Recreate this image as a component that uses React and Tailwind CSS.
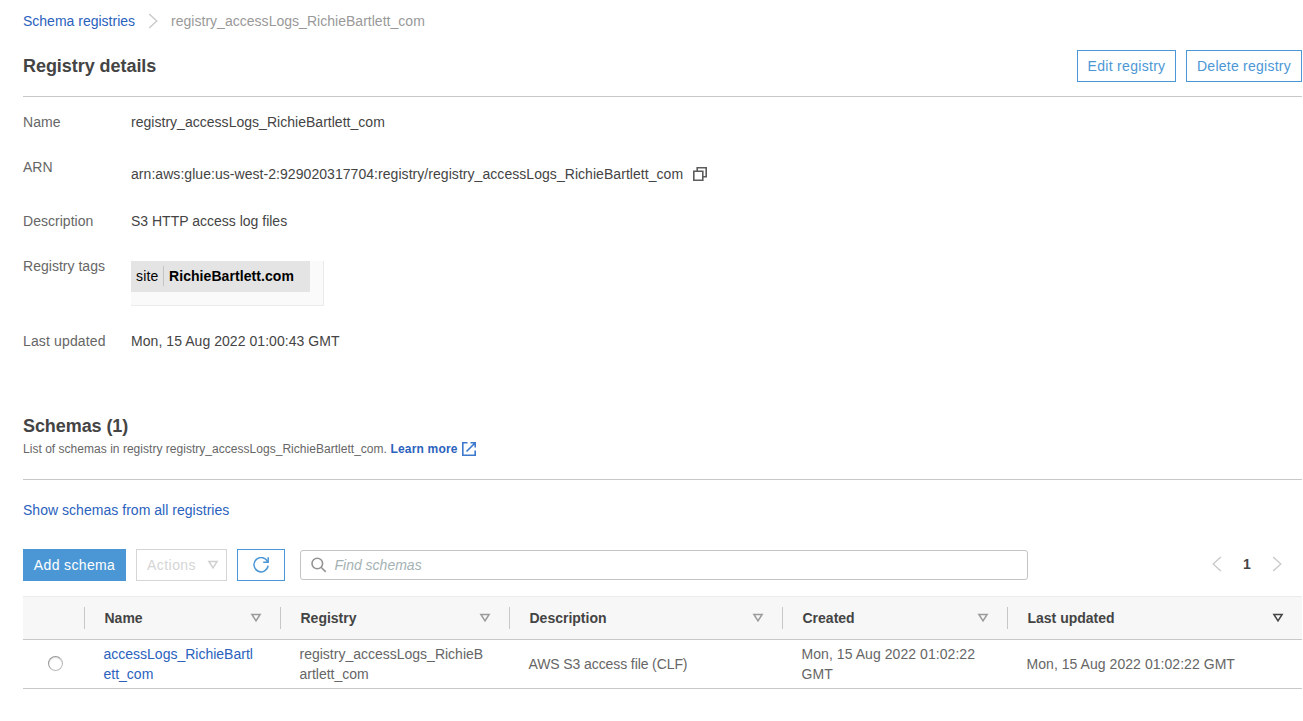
import React from "react";

const Chevron = ({ left }) => (
  <svg width="10" height="16" viewBox="0 0 10 16" fill="none" stroke="#c8c8c8" strokeWidth="1.3" className="shrink-0">
    <path d={left ? "M8.8 1 1.200 8l7.600 7" : "M1.200 1 8.800 8l-7.600 7"} />
  </svg>
);

const Triangle = ({ color = "#9b9b9b" }) => (
  <svg width="12" height="10" viewBox="0 0 12 10" className="shrink-0">
    <path d="M1.900 1.500h8.200L6 7.800z" fill="none" stroke={color} strokeWidth="1.500" />
  </svg>
);

const CopyIcon = () => (
  <svg width="14" height="14" viewBox="0 0 14 14" fill="none" stroke="#5c5c5c" strokeWidth="1.600" className="shrink-0">
    <path d="M.8 4.200h9v9h-9z" />
    <path d="M4.200 4V.8h9v9H10" />
  </svg>
);

const ExternalIcon = () => (
  <svg width="14" height="14" viewBox="0 0 14 14" fill="none" stroke="#3c78cc" strokeWidth="1.600" className="shrink-0">
    <path d="M5.500.8H.8v12.400h12.400V8.500M8.500.8h4.700V5.500M13 1 4.500 9.500" />
  </svg>
);

const RefreshIcon = () => (
  <svg width="16" height="16" viewBox="0 0 16 16" fill="none" stroke="#4b97d6" strokeWidth="1.500" className="shrink-0">
    <path d="M14.700 5.200A7.100 7.100 0 1 0 15.100 8.700" />
    <path d="M15.200.3v5h-5" />
  </svg>
);

const SearchIcon = () => (
  <svg width="16" height="16" viewBox="0 0 16 16" fill="none" stroke="#949494" strokeWidth="1.600" className="shrink-0">
    <circle cx="6.300" cy="6.500" r="5.300" />
    <path d="m10.100 10.300 4.600 4.600" />
  </svg>
);

const Label = ({ children }) => <dt className="w-[108px] shrink-0 text-[#666]">{children}</dt>;

const HeaderCell = ({ children, className, triangle }) => (
  <div className={`flex h-full shrink-0 items-center ${className}`}>
    <div className="flex h-[22px] flex-1 items-center justify-between border-l border-[#c8c8c8] pl-[19.500px]">
      <span className="font-bold tracking-normal text-[#444]">{children}</span>
      <span className="mr-[18px]">
        <Triangle color={triangle} />
      </span>
    </div>
  </div>
);

export default function App() {
  return (
    <main className="h-[721px] w-[1303px] overflow-hidden bg-white pl-[23px] pr-px pt-[11px] font-['Liberation_Sans',Arial,sans-serif] text-[14px] leading-[20px] tracking-[0.025px] text-[#444]">
      <nav className="flex h-[20px] items-center whitespace-nowrap">
        <a className="w-[112px] tracking-normal text-[#2a62bd]">Schema registries</a>
        <span className="ml-[13px] mr-[13px]"><Chevron /></span>
        <span className="text-[#999]">registry_accessLogs_RichieBartlett_com</span>
      </nav>

      <header className="mt-[19px] flex h-[47px] items-start justify-between border-b border-[#c8c8c8]">
        <h2 className="text-[18px] font-bold leading-[32px] tracking-[-0.05px]">Registry details</h2>
        <div className="flex gap-[10px]">
          <button className="h-[32px] w-[99px] border border-[#4b97d6] tracking-[0.300px] text-[#4b97d6]">Edit registry</button>
          <button className="h-[32px] w-[116px] border border-[#4b97d6] tracking-[0.250px] text-[#4b97d6]">Delete registry</button>
        </div>
      </header>

      <dl className="mt-[15px]">
        <div className="flex h-[45px]">
          <Label>Name</Label>
          <dd>registry_accessLogs_RichieBartlett_com</dd>
        </div>
        <div className="flex h-[54px]">
          <Label>ARN</Label>
          <dd className="flex h-[34px] items-center whitespace-nowrap">
            <span className="w-[562px] tracking-[0.052px]">arn:aws:glue:us-west-2:929020317704:registry/registry_accessLogs_RichieBartlett_com</span>
            <CopyIcon />
          </dd>
        </div>
        <div className="flex h-[45px]">
          <Label>Description</Label>
          <dd className="tracking-normal">S3 HTTP access log files</dd>
        </div>
        <div className="flex h-[75px]">
          <Label>Registry tags</Label>
          <dd className="mt-[5px] h-[45px] w-[193px] border-b border-r border-[#ebebeb] bg-[#fafafa]">
            <div className="flex h-[31px] w-[179px] items-start bg-[#e4e4e4] pl-[5px] pt-[5px] text-black">
              <span className="w-[27px] tracking-[0.200px]">site</span>
              <span className="flex h-[20px] items-center border-l border-[#c4c4c4] pl-[5px] font-bold tracking-[0.070px]">RichieBartlett.com</span>
            </div>
          </dd>
        </div>
        <div className="flex h-[20px]">
          <Label><span className="tracking-[0.140px]">Last updated</span></Label>
          <dd className="tracking-[0.055px]">Mon, 15 Aug 2022 01:00:43 GMT</dd>
        </div>
      </dl>

      <section className="mt-[64px] h-[65px] border-b border-[#c8c8c8]">
        <h2 className="text-[18px] font-bold leading-[22px] tracking-[-0.080px]">Schemas (1)</h2>
        <p className="mt-[3px] flex h-[18px] items-center whitespace-nowrap text-[12px] leading-[18px] text-[#666]">
          <span className="w-[367.500px] tracking-[0.027px]">List of schemas in registry registry_accessLogs_RichieBartlett_com.</span>
          <a className="w-[71.500px] font-bold tracking-[0.180px] text-[#2a62bd]">Learn more</a>
          <ExternalIcon />
        </p>
      </section>

      <a className="mt-[20px] block tracking-[0.030px] text-[#2a62bd]">Show schemas from all registries</a>

      <div className="mt-[29px] flex h-[32px] items-center">
        <button className="h-[32px] w-[103px] bg-[#4b97d6] tracking-[0.360px] text-white">Add schema</button>
        <button className="ml-[10px] flex h-[32px] w-[91px] items-center border border-[#d5d5d5] pl-[10px] text-[#d5d5d5]">
          <span className="w-[60px] text-left tracking-[0.450px]">Actions</span>
          <Triangle color="#d0d0d0" />
        </button>
        <button className="ml-[10px] flex h-[32px] w-[48px] items-center justify-center border border-[#4b97d6]">
          <RefreshIcon />
        </button>
        <label className="ml-[15px] flex h-[30px] w-[728px] items-center rounded-[3px] border border-[#c4c4c4] pl-[10px]">
          <SearchIcon />
          <span className="ml-[7.500px] italic tracking-normal text-[#a5b2b3]">Find schemas</span>
        </label>
        <div className="ml-auto mr-[20px] flex items-center pb-[2px]">
          <Chevron left />
          <span className="w-[50px] text-center font-bold">1</span>
          <Chevron />
        </div>
      </div>

      <div className="mt-[15px] flex h-[44px] items-center border-b border-t border-b-[#c8c8c8] border-t-[#ebebeb] bg-[#f7f7f7]">
        <div className="w-[61px] shrink-0" />
        <HeaderCell className="w-[196px]">Name</HeaderCell>
        <HeaderCell className="w-[229px]">Registry</HeaderCell>
        <HeaderCell className="w-[273px]">Description</HeaderCell>
        <HeaderCell className="w-[225px]">Created</HeaderCell>
        <HeaderCell className="w-[295px]" triangle="#444">Last updated</HeaderCell>
      </div>
      <div className="flex h-[49px] items-center border-b border-[#c8c8c8] text-[#666]">
        <div className="flex w-[80.500px] shrink-0 pl-[25px]">
          <span className="-mt-px h-[15px] w-[15px] rounded-full border border-b-[#bbb] border-l-[#999] border-r-[#bbb] border-t-[#999] bg-white shadow-[inset_0_1px_1px_#ddd]" />
        </div>
        <div className="w-[196px] shrink-0 tracking-normal text-[#2a62bd]">accessLogs_RichieBartl<br />ett_com</div>
        <div className="w-[229px] shrink-0 tracking-normal">registry_accessLogs_RichieB<br />artlett_com</div>
        <div className="w-[273px] shrink-0 tracking-[-0.100px]">AWS S3 access file (CLF)</div>
        <div className="w-[225px] shrink-0 tracking-[0.060px]">Mon, 15 Aug 2022 01:02:22<br />GMT</div>
        <div className="tracking-[0.050px]">Mon, 15 Aug 2022 01:02:22 GMT</div>
      </div>
    </main>
  );
}
